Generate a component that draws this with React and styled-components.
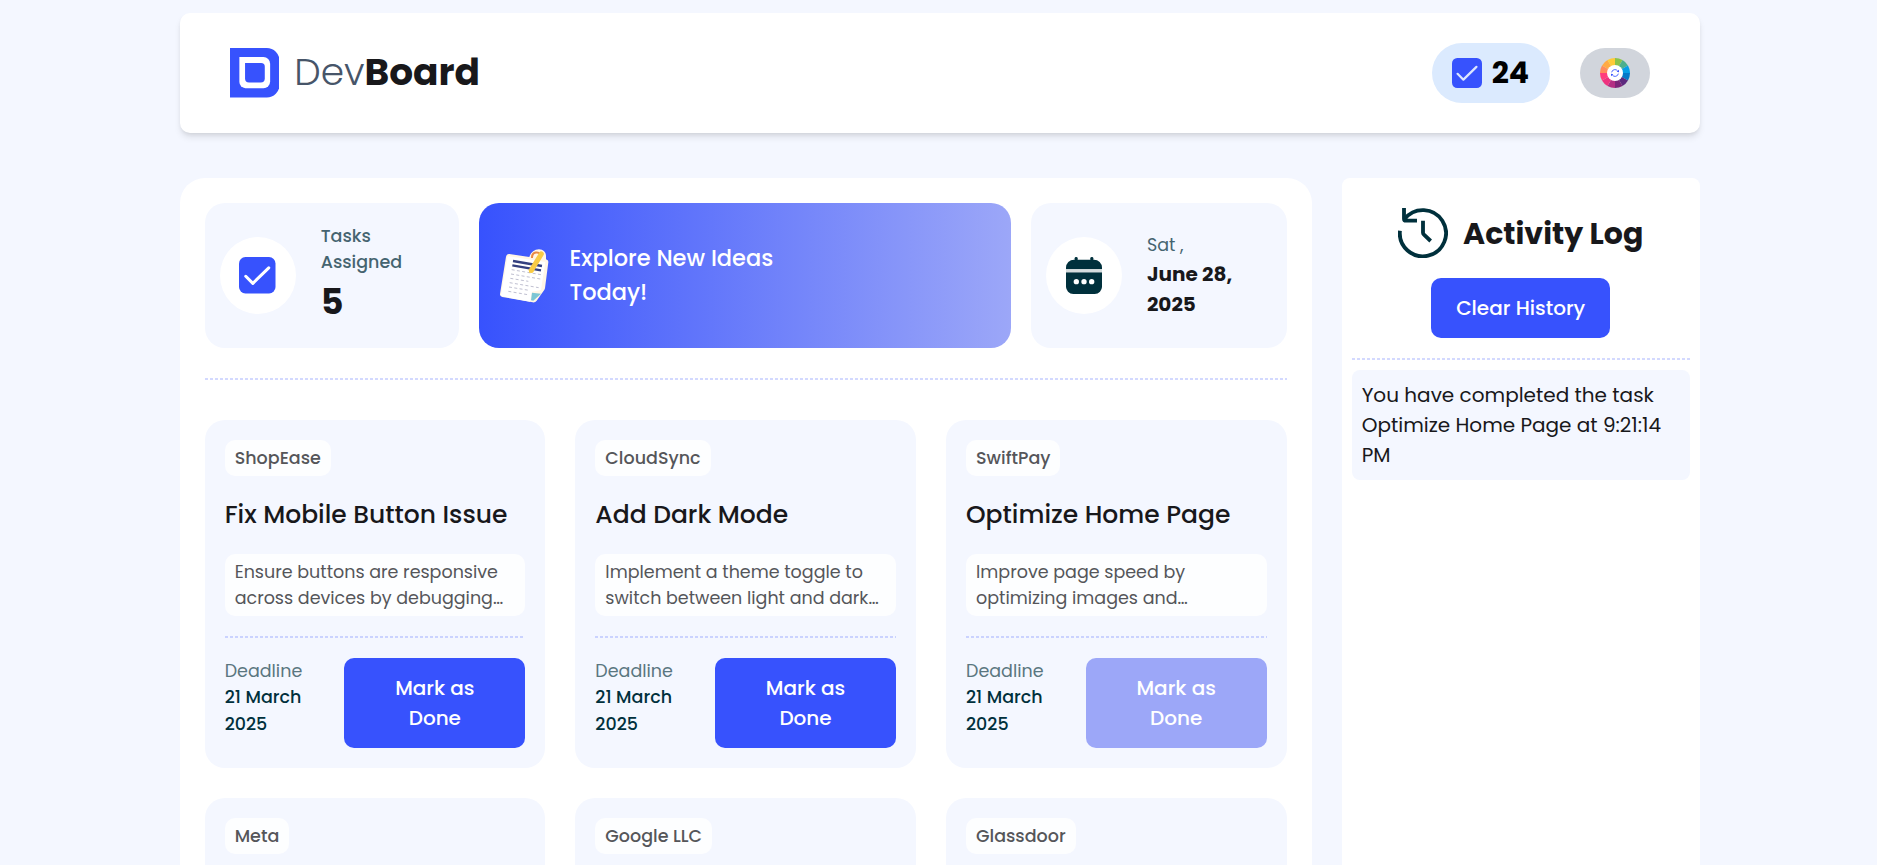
import React from 'react';
import styled, { createGlobalStyle, css } from 'styled-components';

const color = {
  page: '#f4f7ff',
  blue: '#3752fd',
  blueSoft: '#9ca7f8',
  ink: '#18181b',
  navy: '#00303c',
};

const GlobalStyle = createGlobalStyle`
  *, *::before, *::after { box-sizing: border-box; }
  body {
    margin: 0;
    background: ${color.page};
    color: ${color.ink};
    font-family: Poppins, Inter, "Open Sans", sans-serif;
    font-size: 20px;
    line-height: 30px;
  }
  h1, h2, h3, p { margin: 0; font: inherit; }
  svg { display: block; flex: none; }
`;

const Page = styled.div`
  display: flex;
  flex-direction: column;
  width: 1520px;
  height: 865px;
  margin-left: 179.7px;
  padding-top: 13px;
`;

/* One unbroken line of text. */
const Line = styled.span`
  display: block;
  white-space: pre;
`;

const Header = styled.header`
  display: flex;
  flex: none;
  align-items: center;
  justify-content: space-between;
  height: 120px;
  padding: 0 50px;
  border-radius: 10px;
  background: #fff;
  box-shadow: 0 5px 7.5px -1.25px rgba(0, 0, 0, 0.1), 0 2.5px 5px -2.5px rgba(0, 0, 0, 0.1);
`;

const Brand = styled.div`
  display: flex;
  align-items: center;
  gap: 15px;
`;

const BrandName = styled.h1`
  display: flex;
  margin-top: -1px;
  font-size: 37.5px;
  line-height: 45px;
`;

const Light = styled(Line)`
  font-weight: 300;
  color: #475569;
`;

const Strong = styled(Line)`
  font-weight: 700;
`;

const HeaderActions = styled.div`
  display: flex;
  align-items: center;
  gap: 30px;
`;

const Counter = styled.div`
  display: flex;
  align-items: center;
  gap: 10px;
  width: 118px;
  height: 60px;
  padding-left: 20px;
  border-radius: 30px;
  background: #dbeafe;
  color: #000;
  font-size: 30px;
  font-weight: 700;
`;

const ThemeButton = styled.button`
  display: grid;
  place-items: center;
  width: 70px;
  height: 50px;
  padding: 0;
  border: 0;
  border-radius: 25px;
  background: #d1d5dc;
`;

const Columns = styled.div`
  display: grid;
  flex: 1;
  grid-template-columns: 1132px 358px;
  gap: 30px;
  min-height: 0;
  margin-top: 45px;
  overflow: hidden;
`;

const Board = styled.main`
  padding: 25px;
  border-radius: 25px 25px 0 0;
  background: #fff;
`;

const Stats = styled.section`
  display: grid;
  grid-template-columns: 254.75px 531.5px 255.75px;
  gap: 20px;
  height: 145px;
`;

const StatCard = styled.div`
  display: flex;
  align-items: center;
  gap: 25px;
  padding: 0 15px;
  border-radius: 20px;
  background: ${color.page};
`;

const Disc = styled.div`
  display: grid;
  place-items: center;
  flex: none;
  width: 76px;
  height: 77px;
  border-radius: 50%;
  background: #fff;
`;

const StatLabel = styled.p`
  color: #456470;
  font-size: 17.5px;
  font-weight: ${(p) => p.$weight};
  line-height: 26.25px;
`;

const StatNumber = styled.p`
  font-size: 35px;
  font-weight: 700;
  line-height: 52.5px;
`;

const StatDate = styled.p`
  font-weight: 700;
`;

const Banner = styled.div`
  display: flex;
  align-items: center;
  gap: 20px;
  padding-left: 20px;
  border-radius: 20px;
  background: linear-gradient(90deg, ${color.blue}, ${color.blueSoft});
  color: #fff;
  font-size: 22.5px;
  font-weight: 500;
  line-height: 33.75px;
`;

const Dashes = styled.div`
  height: 2px;
  background: repeating-linear-gradient(90deg, rgba(55, 82, 253, 0.22) 0 3px, transparent 3px 5px);
  ${(p) => p.$section && css`margin: 30px 0 40px;`}
`;

const Tasks = styled.section`
  display: grid;
  grid-template-columns: repeat(3, minmax(0, 1fr));
  gap: 30px;
`;

const Card = styled.article`
  display: flex;
  flex-direction: column;
  gap: 20px;
  height: 348px;
  padding: 20px;
  border-radius: 20px;
  background: ${color.page};
`;

const Tag = styled.p`
  align-self: flex-start;
  padding: 5px 10px;
  border-radius: 10px;
  background: rgba(255, 255, 255, 0.8);
  color: #55565a;
  font-size: 17.5px;
  font-weight: 500;
  line-height: 26.25px;
`;

const Title = styled.h2`
  font-size: 25px;
  font-weight: 500;
  line-height: 37.5px;
`;

const Description = styled.p`
  padding: 5px 10px;
  border-radius: 10px;
  background: rgba(255, 255, 255, 0.8);
  color: #55565a;
  font-size: 17.5px;
  line-height: 26.25px;
`;

const CardFooter = styled.div`
  display: flex;
  align-items: flex-start;
  justify-content: space-between;
`;

const Deadline = styled.div`
  color: ${color.navy};
  font-size: 17.5px;
  font-weight: 500;
  line-height: 26.25px;
`;

const DeadlineLabel = styled(Line)`
  color: #5a7680;
  font-weight: 400;
`;

const Button = styled.button`
  display: flex;
  flex-direction: column;
  align-items: center;
  justify-content: center;
  width: ${(p) => p.$width}px;
  height: ${(p) => p.$height}px;
  padding: 0;
  border: 0;
  border-radius: 10px;
  background: ${(p) => (p.disabled ? color.blueSoft : color.blue)};
  color: #fff;
  font: inherit;
  font-weight: 500;
`;

const Activity = styled.aside`
  display: flex;
  flex-direction: column;
  padding: 30px 10px;
  border-radius: 8px 8px 0 0;
  background: #fff;
`;

const ActivityHead = styled.div`
  display: flex;
  flex-direction: column;
  align-items: center;
  gap: 20px;
  margin-bottom: 20px;
`;

const ActivityTitle = styled.h2`
  display: flex;
  align-items: center;
  gap: 15px;
  font-size: 30px;
  font-weight: 700;
  line-height: 45px;
`;

const LogEntry = styled.p`
  margin-top: 10px;
  padding: 10px;
  border-radius: 8px;
  background: ${color.page};
`;

const Logo = () => (
  <svg width="49.5" height="49.5" viewBox="0 0 148 148">
    <path fill={color.blue} d="M0 0h110a38 38 0 0 1 38 38v72a38 38 0 0 1-38 38H0z" />
    <path fill="#fff" d="M28 27h72a20 20 0 0 1 20 20v53a20 20 0 0 1-20 20H46a18 18 0 0 1-18-18z" />
    <path fill={color.blue} d="M45 45h48a11 11 0 0 1 11 11v35a12 12 0 0 1-12 12H57a12 12 0 0 1-12-12z" />
  </svg>
);

const CheckIcon = ({ size, tone = '#fff', weight = 9 }) => (
  <svg width={size} height={size} viewBox="0 0 108 108">
    <rect width="108" height="108" rx="19" fill={color.blue} />
    <path d="M20 57l21 21 47-46" fill="none" stroke={tone} strokeWidth={weight} strokeLinecap="round" strokeLinejoin="round" />
  </svg>
);

const wheelTones = [
  '#8bc34a', '#4caf8e', '#069fe6', '#0479c8', '#5c2a7e', '#7b2578',
  '#b32e83', '#ee327f', '#ff3d7c', '#ff8c5c', '#ffab45', '#ffcb38',
];

const wheelPoint = (step) => {
  const a = (step * Math.PI) / 6;
  return `${(45 * Math.sin(a)).toFixed(2)} ${(-45 * Math.cos(a)).toFixed(2)}`;
};

const WheelIcon = () => (
  <svg width="30" height="30" viewBox="-45 -45 90 90">
    {wheelTones.map((tone, i) => (
      <path key={tone} fill={tone} d={`M0 0L${wheelPoint(i)}A45 45 0 0 1 ${wheelPoint(i + 1)}z`} />
    ))}
    <circle r="24" fill="#fff" />
    <g fill="none" stroke={color.blue} strokeWidth="2.6">
      <path d="M-10-2A10 10 0 0 1 8-6" />
      <path d="M10 2A10 10 0 0 1-8 6" />
    </g>
    <path fill={color.blue} d="M12-10v8L5-4zM-12 10V2l7 2z" />
  </svg>
);

const CalendarIcon = () => (
  <svg width="36" height="37" viewBox="0 0 108 111">
    <g fill={color.navy}>
      <rect x="26" y="0" width="9" height="16" rx="4" />
      <rect x="73" y="0" width="9" height="16" rx="4" />
      <path d="M0 37V32A24 24 0 0 1 24 8h60a24 24 0 0 1 24 24v5z" />
      <path d="M0 46h108v42a22 22 0 0 1-22 23H22A22 22 0 0 1 0 88z" />
    </g>
    <path fill="#d5dcde" d="M0 37h108v9H0z" />
    <g fill="#fff">
      <circle cx="31" cy="74" r="8" />
      <circle cx="54" cy="74" r="8" />
      <circle cx="77" cy="74" r="8" />
    </g>
  </svg>
);

const HistoryIcon = () => (
  <svg width="50" height="50" viewBox="0 0 150 150" fill="none" stroke={color.navy} strokeWidth="11.5">
    <path d="M5.8 68A69.3 69.3 0 1 0 20 33" />
    <path d="M18 0v32q0 6 6 6h33" />
    <path d="M75 38v36q0 3 3 6l20 19" />
  </svg>
);

const NotesIcon = () => (
  <svg width="50" height="54" viewBox="15 18 150 162">
    <path
      fill="#fff6e6"
      d="M46 33l60 9c4-14 14-22 29-23 13 0 21 9 21 20v10q8 2 7 9l-10 78q-1 5-5 9l-20 28q-4 6-12 5l-91-16q-8-2-7-9L36 41q2-9 10-8z"
    />
    <path fill="#fff" d="M45 40l109 17-13 84-27 5-6 30-84-16q-4-1-3-5L40 44q1-5 5-4z" />
    <path fill="#7cc6d4" d="M114 149l27 3-23 21-7-1z" />
    <g stroke="#34407f" strokeWidth="7">
      <path d="M57 54l87 15M55 67l86 15" />
    </g>
    <g stroke="#b5b5c8" strokeWidth="2.6" strokeDasharray="9 7">
      <path d="M53 80l88 15M51 93l88 15M49 106l54 9M47 119l87 15M45 132l60 10M43 145l58 10" />
    </g>
    <path d="M114 45c-1-20 23-21 25-9" fill="none" stroke="#e98a43" strokeWidth="6" />
    <path d="M142 33L112 82" fill="none" stroke="#f8cb45" strokeWidth="15" strokeLinecap="round" />
    <path fill="#f8cb45" d="M104 78l15 8-13 4z" />
  </svg>
);

const tasks = [
  {
    company: 'ShopEase',
    title: 'Fix Mobile Button Issue',
    text: ['Ensure buttons are responsive', 'across devices by debugging…'],
  },
  {
    company: 'CloudSync',
    title: 'Add Dark Mode',
    text: ['Implement a theme toggle to', 'switch between light and dark…'],
  },
  {
    company: 'SwiftPay',
    title: 'Optimize Home Page',
    text: ['Improve page speed by', 'optimizing images and…'],
    done: true,
  },
  { company: 'Meta' },
  { company: 'Google LLC' },
  { company: 'Glassdoor' },
];

const TaskCard = ({ task }) => (
  <Card>
    <Tag>{task.company}</Tag>
    {task.title && (
      <>
        <Title>{task.title}</Title>
        <Description>
          {task.text.map((words) => <Line key={words}>{words}</Line>)}
        </Description>
        <Dashes />
        <CardFooter>
          <Deadline>
            <DeadlineLabel>Deadline</DeadlineLabel>
            <Line>21 March</Line>
            <Line>2025</Line>
          </Deadline>
          <Button $width={181} $height={90} disabled={task.done}>
            <Line>Mark as</Line>
            <Line>Done</Line>
          </Button>
        </CardFooter>
      </>
    )}
  </Card>
);

export default function App() {
  return (
    <>
      <GlobalStyle />
      <Page>
        <Header>
          <Brand>
            <Logo />
            <BrandName>
              <Light>Dev</Light>
              <Strong>Board</Strong>
            </BrandName>
          </Brand>
          <HeaderActions>
            <Counter>
              <CheckIcon size={30} tone="#dce6ff" weight={8} />
              24
            </Counter>
            <ThemeButton><WheelIcon /></ThemeButton>
          </HeaderActions>
        </Header>
        <Columns>
          <Board>
            <Stats>
              <StatCard>
                <Disc><CheckIcon size={36.5} /></Disc>
                <div>
                  <StatLabel $weight={500}>
                    <Line>Tasks</Line>
                    <Line>Assigned</Line>
                  </StatLabel>
                  <StatNumber>5</StatNumber>
                </div>
              </StatCard>
              <Banner>
                <NotesIcon />
                <div>
                  <Line>Explore New Ideas</Line>
                  <Line>Today!</Line>
                </div>
              </Banner>
              <StatCard>
                <Disc><CalendarIcon /></Disc>
                <div>
                  <StatLabel $weight={400}>Sat ,</StatLabel>
                  <StatDate>
                    <Line>June 28,</Line>
                    <Line>2025</Line>
                  </StatDate>
                </div>
              </StatCard>
            </Stats>
            <Dashes $section />
            <Tasks>
              {tasks.map((task) => <TaskCard key={task.company} task={task} />)}
            </Tasks>
          </Board>
          <Activity>
            <ActivityHead>
              <ActivityTitle>
                <HistoryIcon />
                <Line>Activity Log</Line>
              </ActivityTitle>
              <Button $width={179} $height={60}><Line>Clear History</Line></Button>
            </ActivityHead>
            <Dashes />
            <LogEntry>
              <Line>You have completed the task</Line>
              <Line>Optimize Home Page at 9:21:14</Line>
              <Line>PM</Line>
            </LogEntry>
          </Activity>
        </Columns>
      </Page>
    </>
  );
}
